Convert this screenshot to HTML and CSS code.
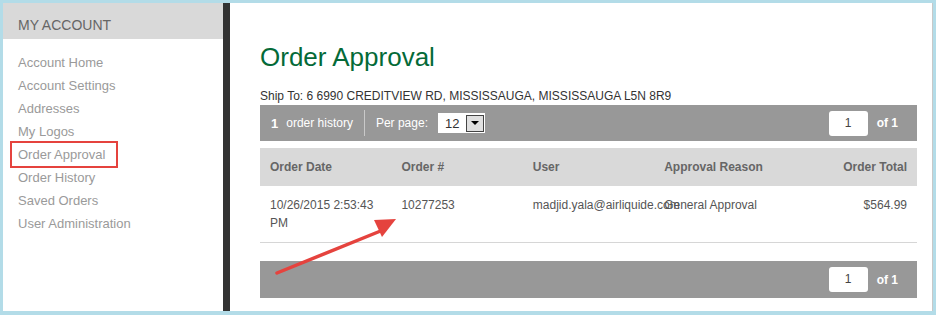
FILE: index.html
```html
<!DOCTYPE html>
<html lang="en">

<head>
    <meta charset="UTF-8">
    <meta name="viewport" content="width=device-width, initial-scale=1.0">
    <title>Order Approval</title>
    <link rel="stylesheet" href="styles.css">
</head>

<body>
    <div class="frame">
        <!-- left menu -->
        <div class="sidebar">
            <div class="side-title">MY ACCOUNT</div>
            <ul class="side-menu">
                <li><a href="#">Account Home</a></li>
                <li><a href="#">Account Settings</a></li>
                <li><a href="#">Addresses</a></li>
                <li><a href="#">My Logos</a></li>
                <li><a href="#" class="marked">Order Approval</a></li>
                <li><a href="#">Order History</a></li>
                <li><a href="#">Saved Orders</a></li>
                <li><a href="#">User Administration</a></li>
            </ul>
        </div>
        <!-- main content -->
        <div class="main">
            <h1 class="title">Order Approval</h1>
            <p class="ship">Ship To: 6 6990 CREDITVIEW RD, MISSISSAUGA, MISSISSAUGA L5N 8R9</p>
            <div class="pager">
                <b class="count">1</b>
                <span class="label">order history</span>
                <span class="sep"></span>
                <span class="label">Per page:</span>
                <div class="select">
                    <span>12</span>
                    <span class="drop"></span>
                </div>
                <div class="pages">
                    <span class="page-box">1</span>
                    <b class="of">of 1</b>
                </div>
            </div>
            <table class="orders">
                <thead>
                    <tr>
                        <th>Order Date</th>
                        <th>Order #</th>
                        <th>User</th>
                        <th>Approval Reason</th>
                        <th class="num">Order Total</th>
                    </tr>
                </thead>
                <tbody>
                    <tr>
                        <td>10/26/2015 2:53:43 PM</td>
                        <td>10277253</td>
                        <td class="nowrap">madjid.yala@airliquide.com</td>
                        <td>General Approval</td>
                        <td class="num">$564.99</td>
                    </tr>
                </tbody>
            </table>
            <div class="pager bottom">
                <div class="pages">
                    <span class="page-box">1</span>
                    <b class="of">of 1</b>
                </div>
            </div>
        </div>
        <!-- annotation arrow -->
        <svg class="arrow" width="140" height="70" viewBox="0 0 140 70">
            <line x1="6" y1="62" x2="112" y2="19" stroke="#e5433e" stroke-width="3.5" stroke-linecap="round" />
            <polygon points="125,8 103,9 111,26" fill="#e5433e" />
        </svg>
    </div>
</body>

</html>
```

FILE: styles.css
```css
body {
    margin: 0;
    font-family: "Liberation Sans", Arial, sans-serif;
}

.frame {
    position: relative;
    display: flex;
    height: 315px;
    box-sizing: border-box;
    padding: 3px 3px 4px 3px;
    background: #b3dce8;
}

/* sidebar */
.sidebar {
    width: 220px;
    background: #fff;
    border-right: 7px solid #333;
}

.side-title {
    height: 32px;
    line-height: 36px;
    padding: 4px 0 0 15px;
    background: #d9d9d9;
    color: #666;
    font-size: 14px;
}

.side-menu {
    list-style: none;
    margin: 0;
    padding: 12px 0 0 15px;
}

.side-menu a {
    display: block;
    width: fit-content;
    line-height: 23px;
    font-size: 13px;
    color: #9a9a9a;
    text-decoration: none;
}

.side-menu a.marked {
    margin-left: -6px;
    padding: 0 11px 0 6px;
    outline: 2px solid #e5433e;
}

/* main */
.main {
    flex: 1;
    background: #fff;
    border-right: 1px solid #c8c8c8;
    padding: 39px 15px 0 30px;
}

.title {
    margin: 0;
    font-size: 26px;
    line-height: 30px;
    font-weight: normal;
    color: #046a38;
}

.ship {
    margin: 17px 0 2px;
    font-size: 12px;
    line-height: 14px;
    color: #333;
}

.pager {
    display: flex;
    align-items: center;
    height: 36px;
    padding: 0 19px 0 11px;
    background: #989898;
    color: #fff;
    font-size: 12px;
}

.pager .count {
    font-size: 13px;
    margin-right: 8px;
}

.pager .sep {
    width: 1px;
    height: 26px;
    margin: 0 11px;
    background: #c9c9c9;
}

.select {
    display: flex;
    align-items: center;
    justify-content: space-between;
    width: 47px;
    height: 20px;
    margin-left: 10px;
    box-sizing: border-box;
    padding: 0 1px 0 7px;
    background: #fff;
    color: #333;
    font-size: 13px;
}

.select .drop {
    position: relative;
    width: 18px;
    height: 17px;
    box-sizing: border-box;
    border: 1px solid #444;
    background: #e0e0e0;
}

.select .drop::after {
    content: "";
    position: absolute;
    left: 4px;
    top: 5px;
    border-left: 4px solid transparent;
    border-right: 4px solid transparent;
    border-top: 4px solid #000;
}

.pages {
    display: flex;
    align-items: center;
    margin-left: auto;
}

.page-box {
    width: 39px;
    height: 25px;
    line-height: 25px;
    text-align: center;
    background: #fff;
    border-radius: 3px;
    color: #444;
    font-size: 12px;
}

.pages .of {
    margin-left: 9px;
}

.pager.bottom {
    height: 37px;
    margin-top: 18px;
}

/* table */
.orders {
    width: 100%;
    margin-top: 7px;
    border-collapse: collapse;
    table-layout: fixed;
    font-size: 12px;
}

.orders th {
    height: 38px;
    padding: 0 10px;
    background: #d9d9d9;
    color: #666;
    text-align: left;
}

.orders td {
    padding: 10px 10px 10px;
    line-height: 18px;
    vertical-align: top;
    color: #555;
    border-bottom: 1px solid #d6d6d6;
}

.orders .num {
    text-align: right;
}

.orders .nowrap {
    white-space: nowrap;
}

/* annotation */
.arrow {
    position: absolute;
    left: 271px;
    top: 211px;
}
```
